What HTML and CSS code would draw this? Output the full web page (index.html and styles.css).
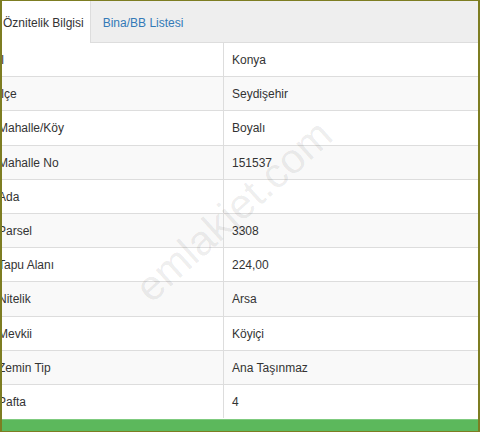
FILE: index.html
```html
<!DOCTYPE html>
<html lang="tr">
<head>
    <meta charset="UTF-8">
    <meta name="viewport" content="width=device-width, initial-scale=1.0">
    <title>Parsel Bilgisi</title>
    <link rel="stylesheet" href="styles.css">
</head>
<body>
    <div class="frame">
        <ul class="nav-tabs">
            <li class="tab active">Öznitelik Bilgisi</li>
            <li class="tab">Bina/BB Listesi</li>
        </ul>

        <div class="panel">
            <table class="info-table">
                <tr><td>İl</td><td>Konya</td></tr>
                <tr><td>İlçe</td><td>Seydişehir</td></tr>
                <tr><td>Mahalle/Köy</td><td>Boyalı</td></tr>
                <tr><td>Mahalle No</td><td>151537</td></tr>
                <tr><td>Ada</td><td></td></tr>
                <tr><td>Parsel</td><td>3308</td></tr>
                <tr><td>Tapu Alanı</td><td>224,00</td></tr>
                <tr><td>Nitelik</td><td>Arsa</td></tr>
                <tr><td>Mevkii</td><td>Köyiçi</td></tr>
                <tr><td>Zemin Tip</td><td>Ana Taşınmaz</td></tr>
                <tr><td>Pafta</td><td>4</td></tr>
            </table>
        </div>

        <div class="status-bar"></div>

        <!-- watermark over the photo -->
        <div class="watermark">emlakjet.com</div>
    </div>
</body>
</html>
```

FILE: styles.css
```css
html, body {
    margin: 0;
    padding: 0;
}
body {
    width: 480px;
    height: 432px;
    font-family: "Liberation Sans", Arial, sans-serif;
    font-size: 12px;
    color: #333;
    background: #fff;
}
.frame {
    position: relative;
    box-sizing: border-box;
    width: 480px;
    height: 432px;
    border: 1px solid #7d7d22;
    border-left-width: 2px;
    border-right-width: 2px;
    overflow: hidden;
    display: flex;
    flex-direction: column;
}

/* tabs */
.nav-tabs {
    list-style: none;
    margin: 0;
    padding: 0;
    display: flex;
    height: 41px;
    background: #eee;
    border-bottom: 1px solid #ddd;
}
.tab {
    padding: 3px 12px 0;
    line-height: 38px;
    color: #337ab7;
}
.tab.active {
    margin-left: -2px;
    padding: 3px 6px 0 3px;
    background: #fff;
    color: #333;
    border-right: 1px solid #ddd;
    height: 39px;
}

/* table */
.panel {
    flex: 1;
    margin-left: -12px;
}
.info-table {
    border-collapse: collapse;
    width: 100%;
    table-layout: fixed;
}
.info-table td {
    padding: 9px 8px 7px;
    line-height: 17.2px;
    border-bottom: 1px solid #ddd;
    vertical-align: top;
}
.info-table td:first-child {
    width: 217px;
    border-right: 1px solid #ddd;
}
.info-table tr:nth-child(even) {
    background: #f9f9f9;
}
.info-table tr:last-child td {
    border-bottom: none;
}

.status-bar {
    height: 11px;
    background: #5cb85c;
    border-top: 1px solid #7fcb7f;
}

.watermark {
    position: absolute;
    left: 108px;
    top: 186px;
    font-size: 42px;
    color: rgba(0, 0, 0, 0.08);
    transform: rotate(-42deg);
    white-space: nowrap;
    pointer-events: none;
}
```
